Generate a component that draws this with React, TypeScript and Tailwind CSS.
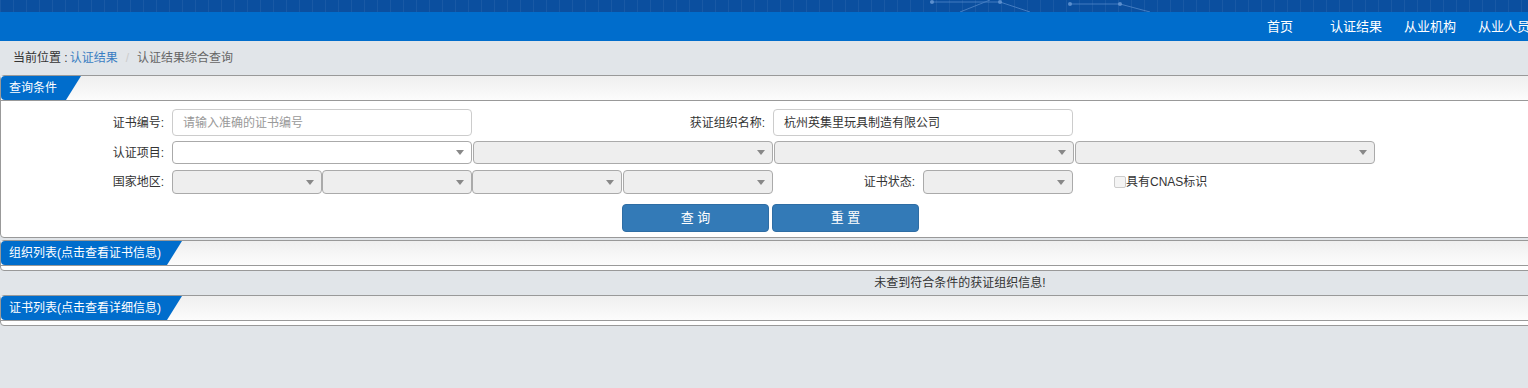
const font = { fontFamily: '"Liberation Sans", "Noto Sans CJK SC", sans-serif' };

const SelectBox = ({ width, white }: { width: string; white?: boolean }) => (
    <div className={`${width} h-full rounded-[4px] border border-[#aaa] flex items-center justify-end pr-[7px] ${white ? 'bg-white' : 'bg-[#eee]'}`}>
        <span className="w-0 h-0 border-l-[4px] border-r-[4px] border-t-[5px] border-l-transparent border-r-transparent border-t-[#888]" />
    </div>
);

const PanelHeader = ({ title, tabWidth }: { title: string; tabWidth: string }) => (
    <div className="h-[25px] flex bg-gradient-to-b from-[#efefef] to-[#fcfcfc] border-b border-[#999]">
        <div className={`${tabWidth} h-[24px] bg-[#006dcc] rounded-l-[4px] text-white text-[12px] leading-[24px] pl-[8px] whitespace-nowrap [clip-path:polygon(0_0,100%_0,calc(100%-15px)_100%,0_100%)]`}>
            {title}
        </div>
    </div>
);

const Label = ({ width, text }: { width: string; text: string }) => (
    <div className={`${width} text-right text-[12px] text-[#333] pr-[8px] self-center`}>{text}</div>
);

export default function App() {
    return (
        <div className="w-[1528px] h-[388px] overflow-hidden bg-[#e1e5e9]" style={font}>
            <div className="w-[1920px]">
                {/* Banner strip */}
                <div className="h-[12px] bg-[#0b4f9f] relative overflow-hidden bg-[linear-gradient(90deg,rgba(255,255,255,0.06)_1px,transparent_1px),linear-gradient(0deg,rgba(255,255,255,0.06)_1px,transparent_1px)] bg-[size:13px_13px]">
                    <svg className="absolute left-[900px] top-0" width="300" height="12" viewBox="0 0 300 12">
                        <g stroke="#5b8fd0" strokeWidth="1" fill="none" opacity="0.7">
                            <line x1="30" y1="2" x2="100" y2="2" />
                            <line x1="100" y1="2" x2="130" y2="12" />
                            <line x1="170" y1="4" x2="220" y2="4" />
                            <line x1="220" y1="4" x2="250" y2="12" />
                            <line x1="60" y1="12" x2="90" y2="0" />
                        </g>
                        <g fill="#6a9ad6" opacity="0.8">
                            <circle cx="32" cy="2" r="2" />
                            <circle cx="100" cy="2" r="2" />
                            <circle cx="170" cy="4" r="2" />
                            <circle cx="220" cy="4" r="2" />
                        </g>
                    </svg>
                </div>

                {/* Nav bar */}
                <div className="h-[29px] bg-[#006dcc] flex items-center pl-[1267px] text-white text-[13px]">
                    <span>首页</span>
                    <span className="ml-[37px]">认证结果</span>
                    <span className="ml-[22px]">从业机构</span>
                    <span className="ml-[22px]">从业人员</span>
                </div>

                {/* Breadcrumb */}
                <div className="h-[34px] flex items-center pl-[13px] text-[12px]">
                    <span className="text-[#333]">当前位置 :</span>
                    <span className="text-[#3a7ec2] ml-[2px]">认证结果</span>
                    <span className="text-[#ccc] mx-[8px]">/</span>
                    <span className="text-[#666]">认证结果综合查询</span>
                </div>

                {/* Query panel */}
                <div className="bg-white border border-[#999] rounded-[4px]">
                    <PanelHeader title="查询条件" tabWidth="w-[80px]" />
                    <div className="pt-[8px] pb-[5px]">
                        <div className="h-[27px] flex">
                            <Label width="w-[171px]" text="证书编号:" />
                            <div className="w-[300px] h-full rounded-[4px] border border-[#ccc] flex items-center pl-[10px] text-[12px] text-[#999]">
                                请输入准确的证书编号
                            </div>
                            <Label width="w-[301px]" text="获证组织名称:" />
                            <div className="w-[300px] h-full rounded-[4px] border border-[#ccc] flex items-center pl-[10px] text-[12px] text-[#333]">
                                杭州英集里玩具制造有限公司
                            </div>
                        </div>
                        <div className="h-[23px] flex mt-[5px]">
                            <Label width="w-[171px]" text="认证项目:" />
                            <SelectBox width="w-[300px]" white />
                            <div className="w-[1px]" />
                            <SelectBox width="w-[300px]" />
                            <div className="w-[1px]" />
                            <SelectBox width="w-[300px]" />
                            <div className="w-[1px]" />
                            <SelectBox width="w-[300px]" />
                        </div>
                        <div className="h-[24px] flex mt-[6px]">
                            <Label width="w-[171px]" text="国家地区:" />
                            <SelectBox width="w-[150px]" />
                            <SelectBox width="w-[150px]" />
                            <SelectBox width="w-[150px]" />
                            <div className="w-[1px]" />
                            <SelectBox width="w-[150px]" />
                            <Label width="w-[150px]" text="证书状态:" />
                            <SelectBox width="w-[150px]" />
                            <div className="ml-[41px] flex items-center text-[12px] text-[#333]">
                                <span className="w-[12px] h-[12px] border border-[#ccc] bg-[#f4f4f4] rounded-[2px]" />
                                <span>具有CNAS标识</span>
                            </div>
                        </div>
                        <div className="flex mt-[10px] pl-[621px] gap-[3px]">
                            <button className="w-[147px] h-[28px] bg-[#337ab7] border border-[#2e6da4] rounded-[4px] text-white text-[13px]">查 询</button>
                            <button className="w-[147px] h-[28px] bg-[#337ab7] border border-[#2e6da4] rounded-[4px] text-white text-[13px]">重 置</button>
                        </div>
                    </div>
                </div>

                {/* Organisation list */}
                <div className="mt-[2px] bg-white border border-[#999] rounded-[4px] pb-[4px]">
                    <PanelHeader title="组织列表(点击查看证书信息)" tabWidth="w-[181px]" />
                </div>
                <div className="h-[24px] flex items-center justify-center text-[12px] text-[#333]">
                    未查到符合条件的获证组织信息!
                </div>

                {/* Certificate list */}
                <div className="bg-white border border-[#999] rounded-[4px] pb-[4px]">
                    <PanelHeader title="证书列表(点击查看详细信息)" tabWidth="w-[181px]" />
                </div>
            </div>
        </div>
    );
}
